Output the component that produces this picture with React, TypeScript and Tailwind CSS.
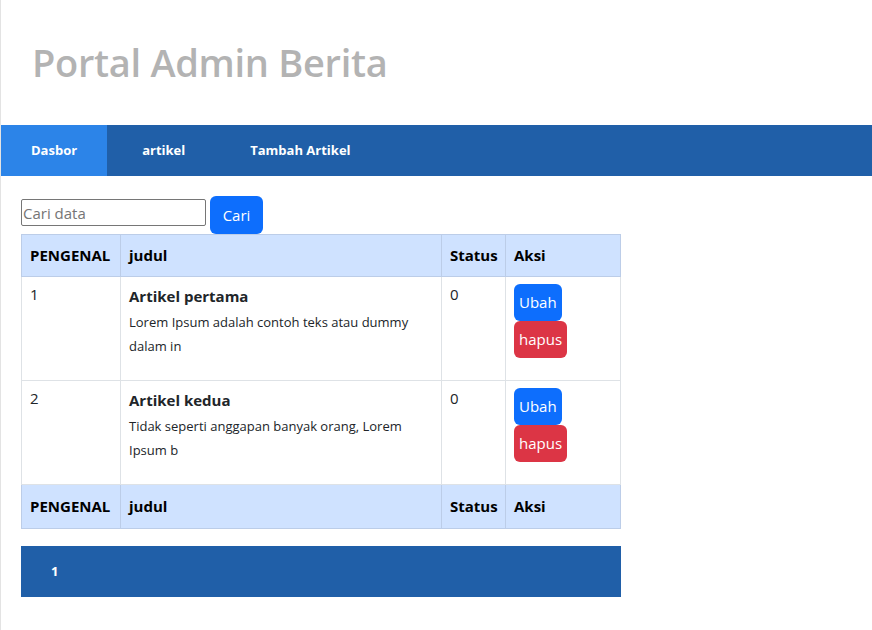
import React from "react";

const articles = [
  {
    id: 1,
    title: "Artikel pertama",
    desc: "Lorem Ipsum adalah contoh teks atau dummy dalam in",
    status: 0,
  },
  {
    id: 2,
    title: "Artikel kedua",
    desc: "Tidak seperti anggapan banyak orang, Lorem Ipsum b",
    status: 0,
  },
];

const navItems = ["Dasbor", "artikel", "Tambah Artikel"];

function HeadRow({ h }: { h: string }) {
  return (
    <tr className={"bg-[#cfe2ff] text-[15px] font-bold text-black " + h}>
      <th className="border border-[#bccde8] px-2 text-left">PENGENAL</th>
      <th className="border border-[#bccde8] px-2 text-left">judul</th>
      <th className="border border-[#bccde8] px-2 text-left">Status</th>
      <th className="border border-[#bccde8] px-2 text-left">Aksi</th>
    </tr>
  );
}

export default function App() {
  return (
    <div className="min-h-[630px] border-l border-[#e3e3e3] bg-white font-['Open_Sans',sans-serif] text-[#212529]">
      <header className="flex h-[125px] items-center px-[31px]">
        <h1 className="text-[38px] font-semibold tracking-[-0.3px] text-[#b3b3b3]">
          Portal Admin Berita
        </h1>
      </header>

      <nav className="flex h-[51px] gap-[5px] bg-[#205fa8]">
        {navItems.map((item, i) => (
          <a
            key={item}
            className={
              "flex items-center px-[30px] text-[13px] font-bold text-white " +
              (i === 0 ? "bg-[#2c84e8]" : "")
            }
          >
            {item}
          </a>
        ))}
      </nav>

      <div className="px-5 pt-5">
        <div className="flex items-end gap-1">
          <input
            placeholder="Cari data"
            className="mb-[8px] h-[27px] w-[185px] rounded-[2px] border border-[#767676] px-[1px] text-[15px] placeholder:text-[#757575]"
          />
          <button className="h-[38px] w-[53px] rounded-[6px] bg-[#0d6efd] text-[15px] text-white">
            Cari
          </button>
        </div>

        <table className="w-[600px] table-fixed border-collapse">
          <colgroup>
            <col className="w-[99px]" />
            <col className="w-[321px]" />
            <col className="w-[64px]" />
            <col />
          </colgroup>
          <thead>
            <HeadRow h="h-[42px]" />
          </thead>
          <tbody>
            {articles.map((a) => (
              <tr key={a.id} className="h-[104px] align-top text-[15px]">
                <td className="border border-[#dee2e6] px-2 pt-[6px]">{a.id}</td>
                <td className="border border-[#dee2e6] px-2 pt-[5px]">
                  <div className="font-bold leading-[28px]">{a.title}</div>
                  <p className="text-[13px] leading-[24px]">{a.desc}</p>
                </td>
                <td className="border border-[#dee2e6] px-2 pt-[6px]">{a.status}</td>
                <td className="border border-[#dee2e6] px-2 pt-[7px]">
                  <div className="flex flex-col items-start">
                    <button className="h-[37px] rounded-[6px] bg-[#0d6efd] px-[5px] text-[15px] text-white">
                      Ubah
                    </button>
                    <button className="h-[37px] rounded-[6px] bg-[#dc3545] px-[5px] text-[15px] text-white">
                      hapus
                    </button>
                  </div>
                </td>
              </tr>
            ))}
          </tbody>
          <tfoot>
            <HeadRow h="h-[44px]" />
          </tfoot>
        </table>

        <div className="mt-[17px] flex h-[51px] w-[600px] items-center bg-[#205fa8] px-[30px] text-[13px] font-bold text-white">
          1
        </div>
      </div>
    </div>
  );
}
